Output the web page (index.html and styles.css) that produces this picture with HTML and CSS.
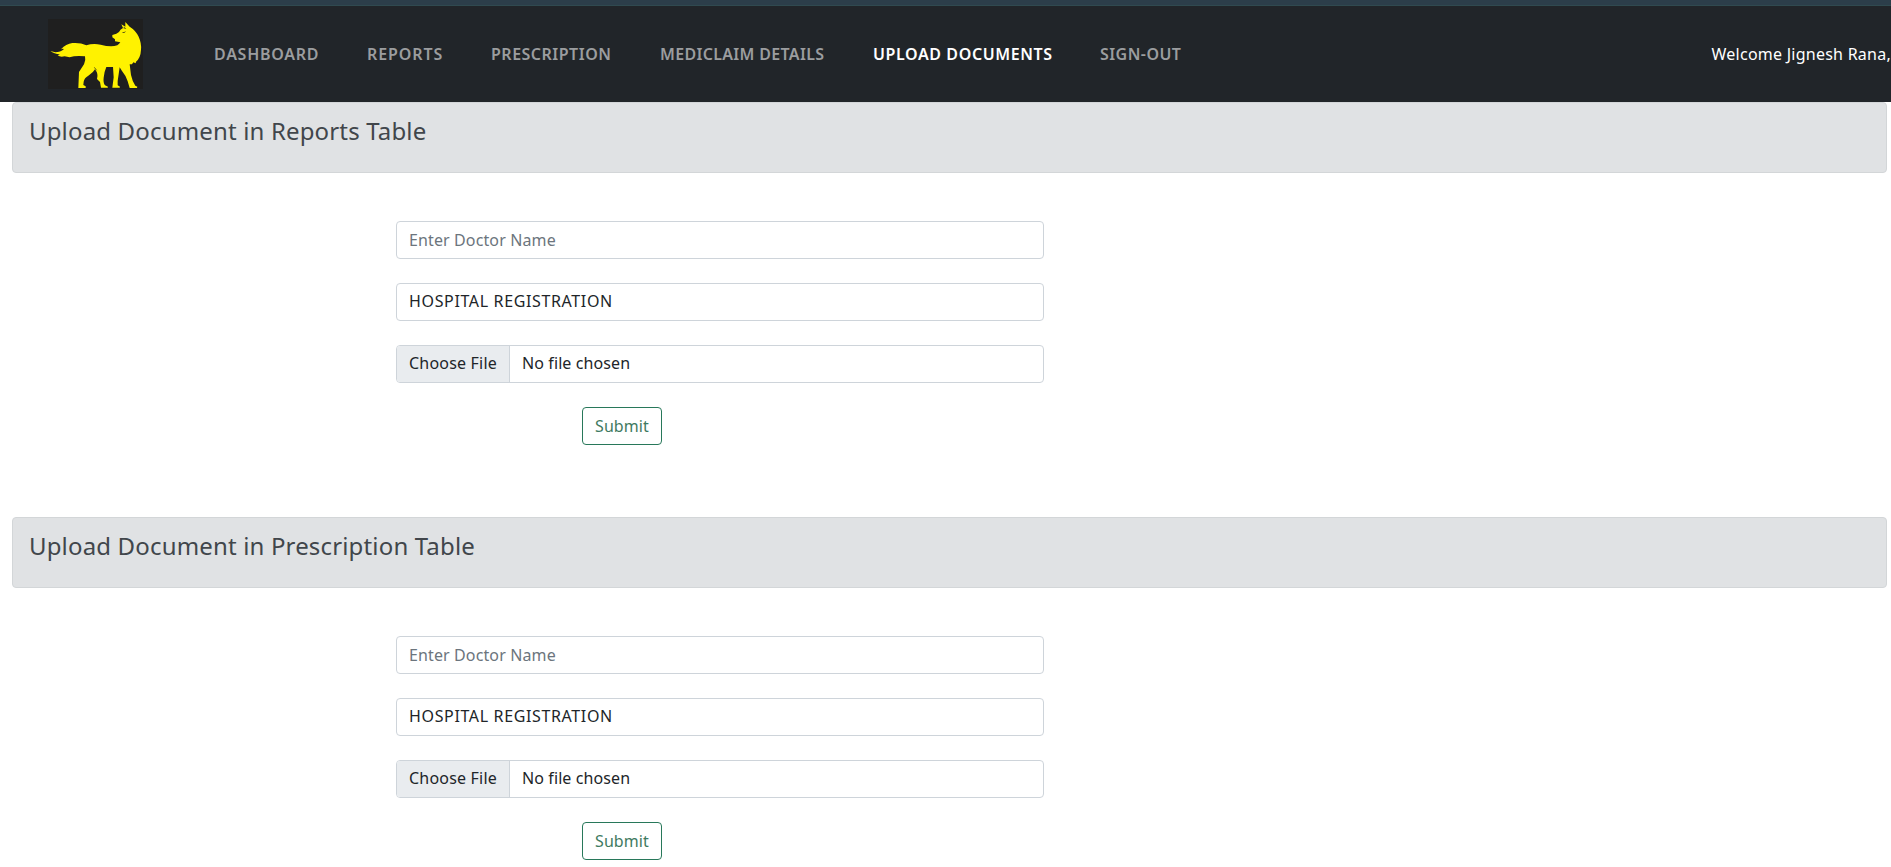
FILE: index.html
```html
<!DOCTYPE html>
<html lang="en">
<head>
<meta charset="utf-8">
<title>Upload Documents</title>
<link rel="stylesheet" href="styles.css">
</head>
<body>
<header class="navbar">
  <svg class="logo" viewBox="144 57 285 210" aria-hidden="true">
    <rect x="144" y="57" width="285" height="210" fill="#1f1f1f"/>
    <path fill="#fff200" d="M151 153 L166 157 Q181 157 192 147 Q188 145 183 148 Q198 131 217 129 Q241 127 259 136 Q279 129 302 134 Q333 143 352 136 Q358 132 361 127 L345 124 L345 118 L337 112 L337 105 Q351 102 357 96 Q360 88 369 84 L364 73 L376 80 L376 66 L389 80 Q407 91 416 110 Q425 130 423 149 Q422 173 408 185 L407 190 L400 187 L396 193 L389 193 L393 225 Q397 244 406 257 L412 260 L411 264 L389 264 L383 244 Q378 227 366 213 L359 202 L353 243 L353 256 L360 260 L359 263 L337 263 L341 232 L339 201 L319 201 Q312 217 311 233 Q309 248 315 256 L324 260 L323 263 L303 263 L300 246 L291 237 Q296 222 285 208 Q280 218 265 227 Q253 233 251 245 L250 255 L257 259 L257 264 L235 264 L237 216 Q245 204 252 193 Q258 181 255 169 Q235 167 222 169 Q209 174 194 169 Q181 173 173 166 L180 163 Q162 162 151 153Z"/>
    <path d="M366 98 Q373 101 378 94 Q373 96 366 98ZM369 84 L374 82 L379 87Z" fill="#1f1f1f"/>
    <path d="M283 202 L290 211" stroke="#1f1f1f" stroke-width="2"/>
  </svg>
  <nav class="links">
    <a class="link l1">DASHBOARD</a>
    <a class="link l2">REPORTS</a>
    <a class="link l3">PRESCRIPTION</a>
    <a class="link l4">MEDICLAIM DETAILS</a>
    <a class="link l5 active">UPLOAD DOCUMENTS</a>
    <a class="link l6">SIGN-OUT</a>
  </nav>
  <span class="welcome">Welcome Jignesh Rana,</span>
</header>
<main>
  <section class="section">
    <div class="banner"><h4 class="title">Upload Document in Reports Table</h4></div>
    <form class="form">
      <input class="control doctor" type="text" placeholder="Enter Doctor Name">
      <div class="control hospital">HOSPITAL REGISTRATION</div>
      <div class="control file"><span class="choose">Choose File</span><span class="chosen">No file chosen</span></div>
      <button class="submit" type="button">Submit</button>
    </form>
  </section>
  <section class="section">
    <div class="banner"><h4 class="title">Upload Document in Prescription Table</h4></div>
    <form class="form">
      <input class="control doctor" type="text" placeholder="Enter Doctor Name">
      <div class="control hospital">HOSPITAL REGISTRATION</div>
      <div class="control file"><span class="choose">Choose File</span><span class="chosen">No file chosen</span></div>
      <button class="submit" type="button">Submit</button>
    </form>
  </section>
</main>
</body>
</html>
```
FILE: styles.css
```css
* { box-sizing: border-box; }
body {
  margin: 0;
  background: #fff;
  color: #212529;
  font: 16px/24px "Noto Sans", "Open Sans", sans-serif;
}
.navbar {
  display: flex;
  align-items: center;
  height: 102px;
  padding-left: 48px;
  border-top: 5px solid #2c3e4a;
  background: #212529;
  box-shadow: inset 0 1px #304a50;
  white-space: nowrap;
}
.logo { width: 95px; height: 70px; flex: none; }
.links {
  display: grid;
  grid-template-columns: 153px 124px 169px 213px 227px 90px;
  margin-left: 71px;
}
.link { color: #9b9d9f; font-weight: 600; }
.link.active { color: #fff; }
.l1 { letter-spacing: .74px; }
.l2 { letter-spacing: .9px; }
.l3 { letter-spacing: .5px; }
.l4 { letter-spacing: .32px; }
.l5 { letter-spacing: .61px; }
.l6 { letter-spacing: .45px; }
.welcome { margin-left: auto; color: #fff; letter-spacing: .25px; }
.section { height: 415px; padding: 0 4px 0 12px; }
.section:last-child { height: auto; }
.banner {
  height: 71px;
  padding: 14px 16px;
  border: 1px solid #d3d6d8;
  border-radius: 4px;
  background: #e0e2e4;
}
.title { margin: 0; color: #41464b; font-size: 24px; font-weight: 400; line-height: 28px; letter-spacing: .16px; }
.form {
  display: flex;
  flex-direction: column;
  gap: 24px;
  width: 648px;
  margin: 48px 0 0 384px;
}
.control {
  width: 100%;
  height: 38px;
  padding: 6px 12px;
  border: 1px solid #ced4da;
  border-radius: 4px;
  background: #fff;
  color: #212529;
  font: inherit;
}
.doctor { letter-spacing: .12px; }
.control::placeholder { color: #6c757d; opacity: 1; }
.hospital { padding-top: 5px; letter-spacing: .64px; }
.file { display: flex; padding: 0; overflow: hidden; line-height: 35px; }
.choose { width: 113px; padding-left: 12px; border-right: 1px solid #ced4da; background: #e9ecef; letter-spacing: .2px; }
.chosen { padding-left: 12px; letter-spacing: .1px; }
.submit {
  width: 80px;
  height: 38px;
  margin-left: 186px;
  padding: 0;
  border: 1px solid #28785a;
  border-radius: 4px;
  background: #fff;
  color: #3f7a61;
  font: inherit;
  letter-spacing: .1px;
}
```
